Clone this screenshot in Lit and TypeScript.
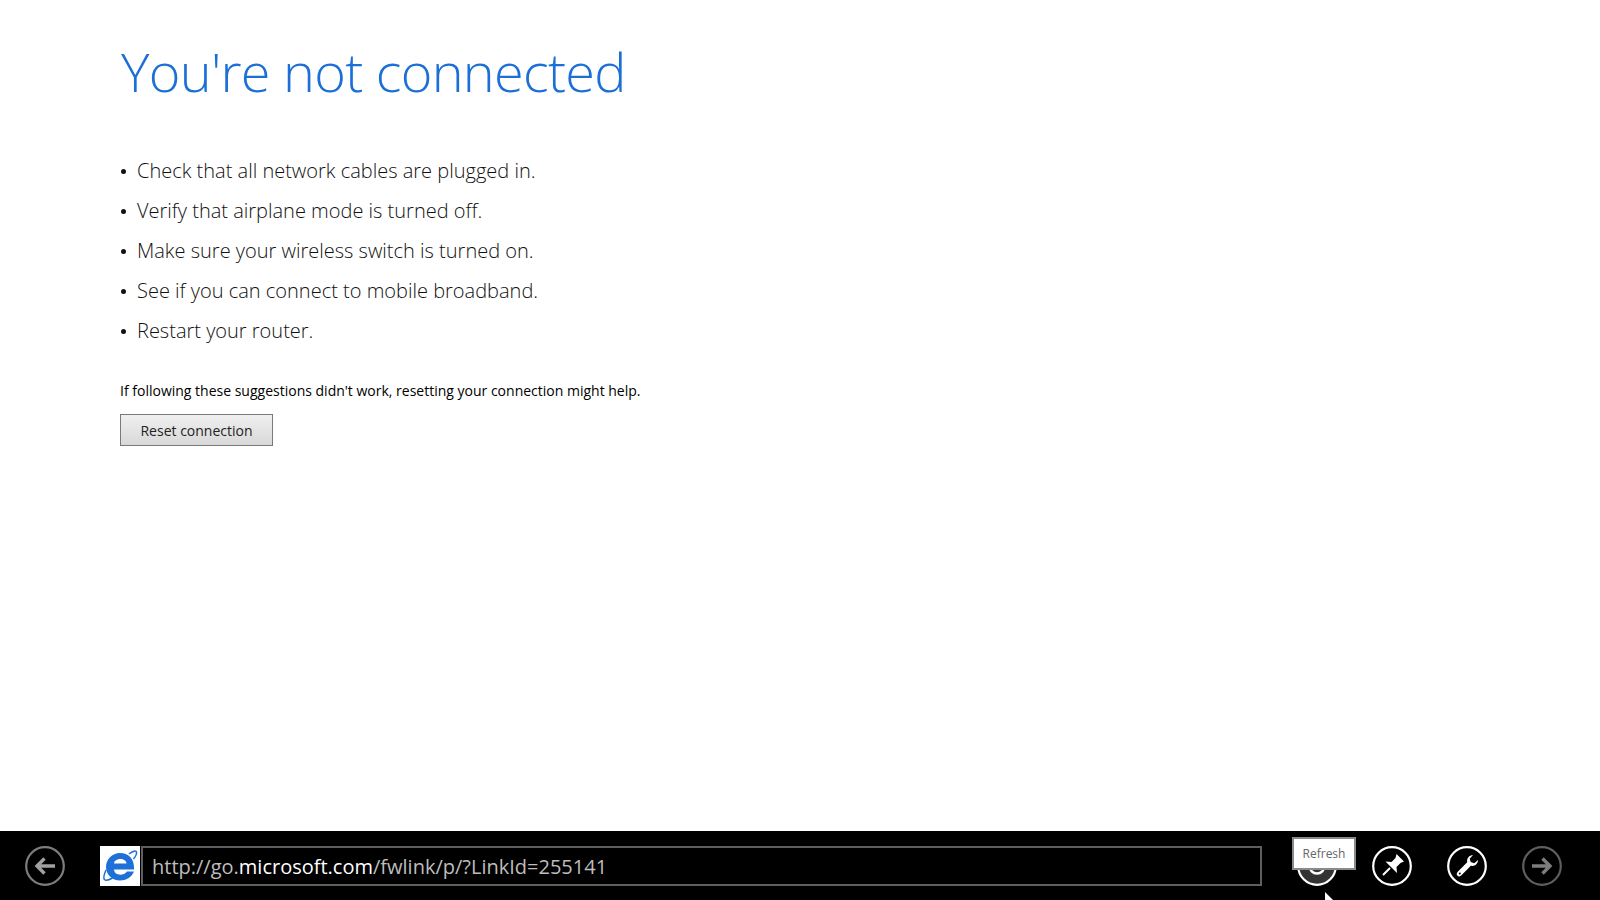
import { LitElement, html, css } from "lit";
import { customElement } from "lit/decorators.js";

const tips = [
  "Check that all network cables are plugged in.",
  "Verify that airplane mode is turned off.",
  "Make sure your wireless switch is turned on.",
  "See if you can connect to mobile broadband.",
  "Restart your router.",
];

@customElement("app-root")
export class AppRoot extends LitElement {
  static styles = css`
    :host { display: block; width: 1600px; height: 900px; overflow: hidden; background: #fff; font-family: "Open Sans", "Noto Sans", sans-serif; }
    .page { height: 900px; display: flex; flex-direction: column; }
    .content { flex: 1; padding: 31px 0 0 120px; }
    h1 { margin: 0; font-size: 54px; line-height: 80px; font-weight: 300; color: #1c6fd6; letter-spacing: -0.72px; text-indent: 1px; }
    ul { list-style: none; margin: 39px 0 0; padding: 0; }
    li { display: flex; height: 40px; align-items: center; font-size: 20px; font-weight: 300; color: #111; }
    .dot { width: 5px; height: 5px; border-radius: 50%; background: #111; margin: 2px 11px 0 1px; }
    p { margin: 31px 0 0; font-size: 14px; line-height: 20px; color: #000; }
    .btn { margin-top: 13px; display: block; box-sizing: border-box; width: 153px; height: 32px; padding: 0; border: 1px solid #7a7a7a; background: linear-gradient(#f0f0f0, #d8d8d8); font: 14px "Open Sans", sans-serif; color: #222; }
    .bar { position: relative; height: 69px; background: #000; display: flex; align-items: flex-start; padding-top: 15px; box-sizing: border-box; }
    .nav { width: 40px; height: 40px; flex: none; display: block; }
    .back { margin-left: 25px; }
    .addr { margin-left: 35px; display: flex; width: 1162px; height: 40px; flex: none; }
    .logo { width: 40px; height: 40px; background: #fff; flex: none; display: block; }
    .url { flex: 1; margin-left: 1px; box-sizing: border-box; border: 2px solid #5e5e5e; background: #000; color: #bdbdbd; font-size: 20px; line-height: 38px; padding-left: 9px; font-weight: 400; white-space: nowrap; }
    .url b { font-weight: 400; color: #fff; }
    .right { display: flex; gap: 35px; margin-left: 35px; }
    .tip { position: absolute; left: 1292px; top: 6px; box-sizing: border-box; width: 64px; height: 33px; background: #fff; border: 2px solid #8a8a8a; color: #666; font-size: 12px; line-height: 29px; text-align: center; }
    .cursor { position: absolute; left: 1325px; top: 61px; width: 14px; height: 12px; display: block; }
  `;

  render() {
    return html`<div class="page">
      <main class="content">
        <h1>You're not connected</h1>
        <ul>${tips.map((t) => html`<li><span class="dot"></span>${t}</li>`)}</ul>
        <p>If following these suggestions didn't work, resetting your connection might help.</p>
        <button class="btn">Reset connection</button>
      </main>
      <footer class="bar">
        <svg class="nav back" viewBox="0 0 40 40" fill="none" stroke="#7d7d7d">
          <circle cx="20" cy="20" r="18.800" stroke-width="2.200"/>
          <path d="M30 20H12M19.500 12.500L12 20l7.500 7.500" stroke-width="3.400" stroke="#a0a0a0"/>
        </svg>
        <div class="addr">
          <svg class="logo" viewBox="0 0 40 40">
            <path d="M29 8c3.500-2.500 7-4 7.500-2 .4 1.800-1 4.500-3 7M6 24c-2 4.500-3 8-1.500 9.500 1.300 1.200 4.500.5 8-1.500" fill="none" stroke="#1f6fd8" stroke-width="1.500"/>
            <path d="M20 7c8.500 0 14 5.500 14 14.500v2H14c.5 6 9 7 13 2h7c-2.500 6-8 9-14 9-8 0-14-6-14-13.500S12 7 20 7zM14 17.500h12.500c-.3-6-12-6-12.500 0z" fill="#1f6fd8" fill-rule="evenodd"/>
          </svg>
          <div class="url">http://go.<b>microsoft.com</b>/fwlink/p/?LinkId=255141</div>
        </div>
        <div class="right">
          <svg class="nav" viewBox="0 0 40 40" fill="none" stroke="#fff">
            <circle cx="20" cy="20" r="18.800" stroke-width="2.200" fill="#333"/>
            <circle cx="20" cy="20" r="7.500" stroke-width="2.500"/>
          </svg>
          <svg class="nav" viewBox="0 0 40 40" fill="none" stroke="#fff">
            <circle cx="20" cy="20" r="18.800" stroke-width="2.200"/>
            <path d="M24.500 8L32 15.500 28.500 17 24.500 21 25 27 13.500 15.500 19.500 16 23.500 12z" fill="#fff" stroke="none"/>
            <path d="M18 22L11 29" stroke-width="2"/>
          </svg>
          <svg class="nav" viewBox="0 0 40 40" fill="none" stroke="#fff">
            <circle cx="20" cy="20" r="18.800" stroke-width="2.200"/>
            <path d="M26 9c-3.800.2-6.500 3.300-5.800 7.200L11 25.500c-1.600 1.600-1.600 3.300-.5 4.200 1 1 2.700 1 4.200-.6l9.200-9.300c4 .8 7-2 7.200-5.800l-3.800 3.300-3.600-1.200-1-3.300z" fill="#fff" stroke="none"/>
            <circle cx="12.800" cy="27.500" r="1" fill="#000" stroke="none"/>
          </svg>
          <svg class="nav" viewBox="0 0 40 40" fill="none" stroke="#5e5e5e">
            <circle cx="20" cy="20" r="18.800" stroke-width="2.200"/>
            <path d="M10 20h18M20.500 12.500L28 20l-7.500 7.500" stroke-width="3.400" stroke="#7d7d7d"/>
          </svg>
        </div>
        <div class="tip">Refresh</div>
        <svg class="cursor" viewBox="0 0 14 12"><path d="M0 0L12 12H0z" fill="#fff"/></svg>
      </footer>
    </div>`;
  }
}
